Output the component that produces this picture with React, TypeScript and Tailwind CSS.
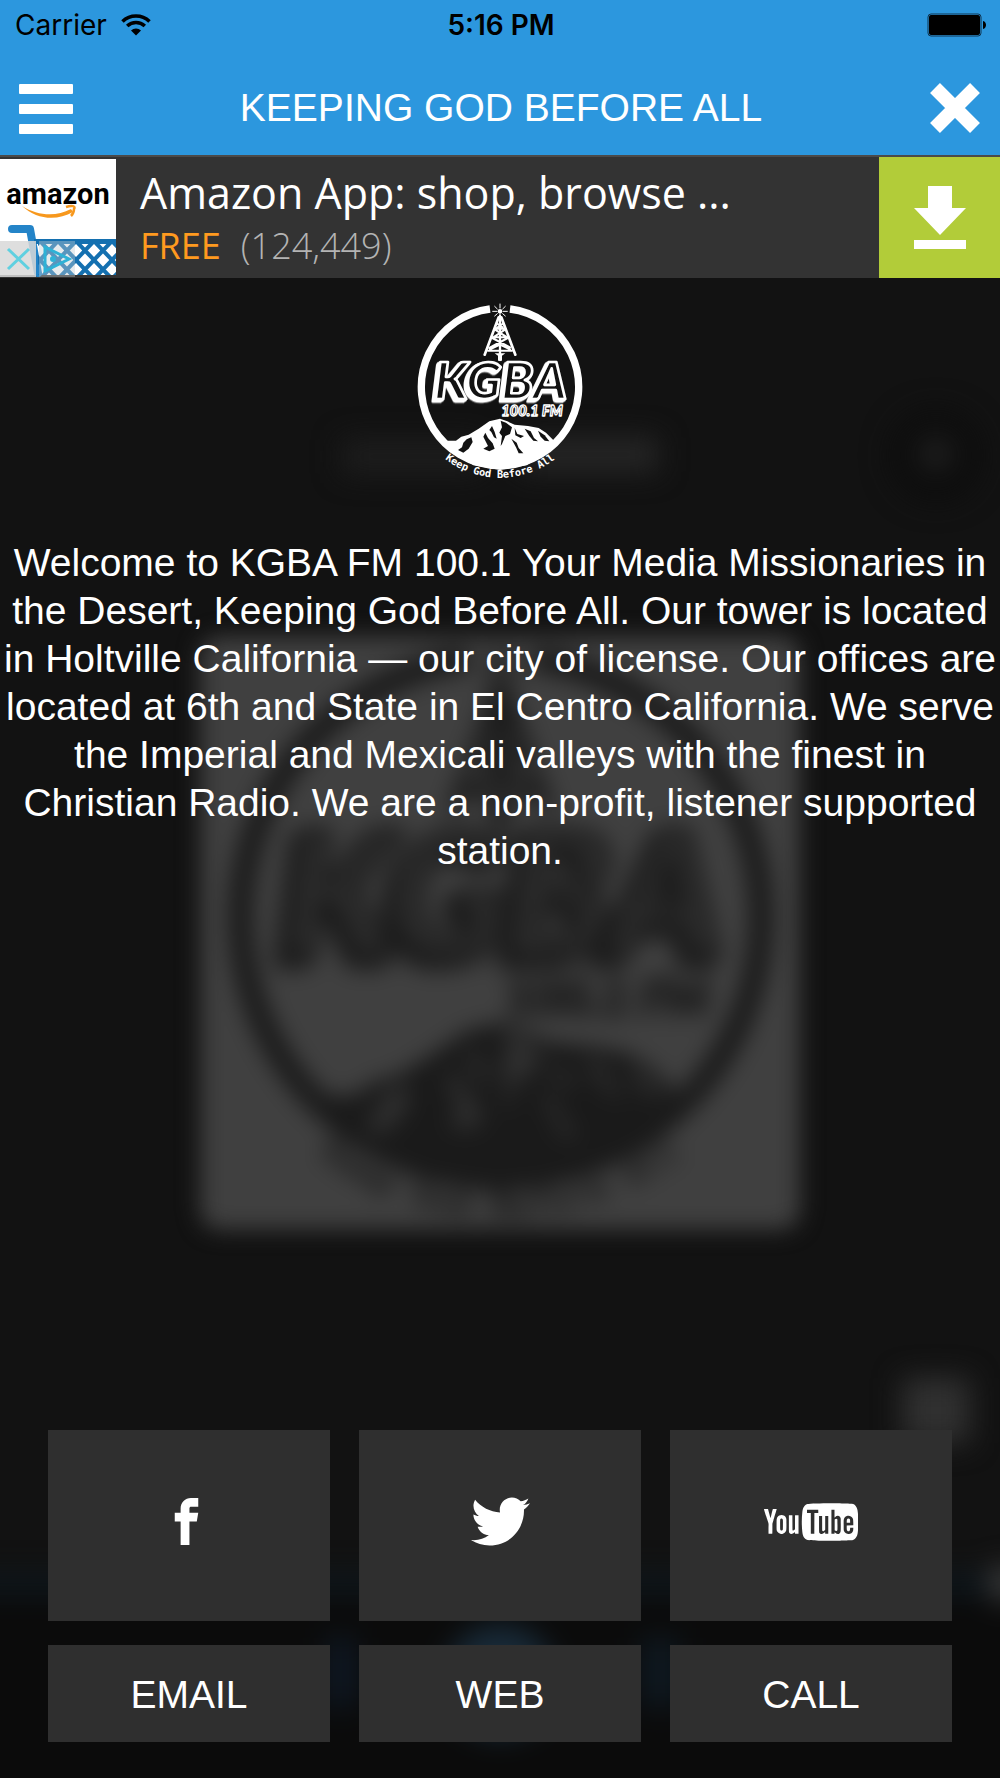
import { useId } from 'react'
import { FaTwitter } from 'react-icons/fa'
import { ImFacebook, ImYoutube2 } from 'react-icons/im'

interface StationLogoProps {
  ink: string
  paper: string
}

function StationLogo({ ink, paper }: StationLogoProps) {
  const arcId = useId()

  return (
    <g color={ink}>
      <path d="M330 57a236 236 0 1 1-60 0" fill="none" stroke={ink} strokeWidth="22" />

      {/* radio tower */}
      <g fill="none" stroke={ink} strokeLinecap="round">
        <path d="M296 82L254 194M304 82L346 194" strokeWidth="8" />
        <path d="M300 78V210" strokeWidth="7" />
        <path
          d="M290 100L308 112M310 100L290 114M284 116H316M284 118L318 140M316 118L280 142M278 142H323M277 144L330 172M323 144L268 174M264 182H336M270 178L300 164L330 178"
          strokeWidth="6"
        />
        <path
          d="M300 42V54M300 72V80M278 64H290M310 64H322M284 49L292 57M316 49L308 57M284 78L292 71M316 78L308 71"
          strokeWidth="3"
        />
      </g>
      <circle cx="300" cy="64" r="7" fill={ink} />
      <path d="M284 190H316L306 197V212H294V197Z" fill={ink} />

      {/* mountains */}
      <path
        d="M134 452L168 452L184 440L206 434L236 416L268 394L300 386L322 394L344 404L384 408L416 414L438 428L462 452L440 490L380 526L300 540L220 526L160 490Z"
        fill={ink}
      />
      <g fill={paper}>
        <path d="M302 392L318 398L336 412L330 432L316 438L306 462L302 468L306 438L298 428L306 412Z" />
        <path d="M214 442L218 456L206 476L190 488L174 480L186 472L190 458L200 448Z" />
        <path d="M256 428L264 444L278 460L284 476L268 484L250 476L264 468L256 452L250 440Z" />
        <path d="M276 408L284 426L290 446L282 442L274 426L268 420Z" />
        <path d="M344 414L352 432L372 438L362 444L346 436Z" />
        <path d="M334 446L350 458L356 474L370 490L356 490L348 472Z" />
        <path d="M374 416L392 424L402 444L414 454L400 452L388 438Z" />
        <path d="M414 422L434 436L448 454L434 452L422 440Z" />
      </g>

      {/* call letters with a drop extrusion */}
      <g className="font-['Lato',sans-serif] font-black italic" fill={paper} stroke={ink} strokeLinejoin="round">
        <text
          x="102"
          y="326"
          fontSize="156"
          strokeWidth="8"
          className="[filter:drop-shadow(-6px_4px_0_currentColor)_drop-shadow(-3px_4px_0_currentColor)]"
        >
          KGBA
        </text>
        <text x="304" y="379" fontSize="44" strokeWidth="4">
          100.1 FM
        </text>
      </g>

      <path id={arcId} d="M28 291a272 272 0 0 0 544 0" fill="none" />
      <text className="font-['DejaVu_Sans_Mono',monospace] font-bold" fontSize="31" fill={ink} textAnchor="middle">
        <textPath href={`#${arcId}`} startOffset="50%">
          Keep God Before All
        </textPath>
      </text>
    </g>
  )
}

// Dimmed player screen that shows through behind the info panel
function Backdrop() {
  return (
    <svg
      viewBox="0 0 1000 1501"
      preserveAspectRatio="xMidYMid slice"
      className="absolute inset-0 h-full w-full"
      aria-hidden="true"
    >
      <defs>
        <filter id="soft" x="-20%" y="-20%" width="140%" height="140%" colorInterpolationFilters="sRGB">
          <feGaussianBlur stdDeviation="11" />
        </filter>
        <filter id="softer" x="-20%" y="-20%" width="140%" height="140%" colorInterpolationFilters="sRGB">
          <feGaussianBlur stdDeviation="14" />
        </filter>
      </defs>
      <rect width="1000" height="1501" fill="#121212" />
      <g filter="url(#softer)">
        <rect x="342" y="162" width="140" height="34" fill="#1d1d1d" />
        <rect x="520" y="160" width="138" height="34" fill="#262626" />
        <circle cx="936" cy="178" r="46" fill="#0d0d0d" />
        <circle cx="936" cy="176" r="18" fill="#1f1f1f" />
        <rect x="902" y="1100" width="68" height="66" rx="4" fill="#303030" />
        <rect x="-40" y="1320" width="1080" height="300" fill="#0b0b0b" />
        <rect x="-40" y="1296" width="1080" height="22" fill="#0d161c" />
        <circle cx="1006" cy="1306" r="18" fill="#3c3c3c" />
        <circle cx="500" cy="1403" r="56" fill="#182a38" />
        <rect x="326" y="1360" width="30" height="70" fill="#0e1824" />
        <rect x="640" y="1360" width="40" height="70" fill="#0e1820" />
      </g>
      <g filter="url(#soft)">
        <rect x="200" y="359" width="600" height="593" rx="20" fill="#404040" />
        <g transform="translate(170 319) scale(1.103)">
          <StationLogo ink="#1a1a1a" paper="#303030" />
        </g>
      </g>
    </svg>
  )
}

function StatusBar() {
  return (
    <div className="grid h-[50px] grid-cols-3 items-center pl-[15px] pr-[13px] font-['Inter',sans-serif] text-[28px] text-black">
      <div className="flex items-center gap-[14px]">
        <span>Carrier</span>
        <svg viewBox="0 0 30 22" className="h-[22px] w-[30px]" aria-label="Wi-Fi">
          <g fill="none" stroke="currentColor" strokeWidth="3.6">
            <path d="M1.5 7.5A19.5 19.5 0 0 1 28.5 7.5" />
            <path d="M6.2 12A13 13 0 0 1 23.8 12" />
          </g>
          <path d="M15 21.5L10 16.5A7.5 7.5 0 0 1 20 16.5Z" fill="currentColor" />
        </svg>
      </div>
      <span className="text-center font-semibold">5:16 PM</span>
      <svg viewBox="0 0 60 24" className="h-6 w-[60px] justify-self-end" aria-label="Battery full">
        <rect x="1" y="1" width="53" height="22" rx="3" fill="none" stroke="#0f3450" />
        <rect x="2" y="2" width="51" height="20" rx="2" />
        <path d="M56 8c4 1 4 7 0 8z" />
      </svg>
    </div>
  )
}

function NavBar() {
  return (
    <div className="flex h-[105px] items-center justify-between px-[19px] pt-3">
      <button type="button" aria-label="Menu" className="flex w-[54px] flex-col gap-[10px]">
        <span className="h-[10px] rounded-[1px] bg-white" />
        <span className="h-[10px] rounded-[1px] bg-white" />
        <span className="h-[10px] rounded-[1px] bg-white" />
      </button>
      <h1 className="text-[39px] text-white">KEEPING GOD BEFORE ALL</h1>
      <button type="button" aria-label="Close">
        <svg viewBox="0 0 52 52" className="h-[52px] w-[52px]">
          <path d="M6 5L46 45M46 5L6 45" stroke="#fff" strokeWidth="14" />
        </svg>
      </button>
    </div>
  )
}

function AmazonIcon() {
  return (
    <svg viewBox="0 0 116 118" className="mt-[2px] h-[118px] w-[116px] shrink-0" aria-label="Amazon">
      <defs>
        <pattern id="mesh" width="18" height="19" patternUnits="userSpaceOnUse" x="76" y="82">
          <path d="M-18 -19L36 38M36 -19L-18 38" stroke="#1470b0" strokeWidth="4" />
        </pattern>
      </defs>
      <rect width="116" height="116" fill="#fff" />
      <text x="58" y="45" textAnchor="middle" className="font-['Roboto',sans-serif] font-bold" fontSize="29">
        amazon
      </text>
      <path d="M22 47C38 57 56 58 71 50L73 53C57 62 37 61 22 47Z" fill="#f7981d" />
      <path d="M66 48C72 46 76 47 74 50C74 54 72 56 71 57" fill="none" stroke="#f7981d" strokeWidth="2.5" />
      <path
        d="M12 70H30L38 114"
        fill="none"
        stroke="#2484c8"
        strokeWidth="8"
        strokeLinecap="round"
        strokeLinejoin="round"
      />
      <rect x="34" y="80" width="82" height="5" fill="#1470b0" />
      <rect x="38" y="85" width="78" height="31" fill="url(#mesh)" />
      <rect x="0" y="82" width="36" height="36" fill="#d8d8d8" opacity="0.85" />
      <rect x="39" y="82" width="36" height="36" fill="#c4ccd2" opacity="0.4" />
      <path d="M8 90L29 110M29 90L8 110" stroke="#5fd0e0" strokeWidth="3" />
      <path d="M45 88L69 100L45 112Z" fill="none" stroke="#2fb2d6" strokeWidth="3" />
      <circle cx="53" cy="100" r="3" fill="#2fb2d6" />
    </svg>
  )
}

function AdBanner() {
  return (
    <aside className="flex h-[123px] border-t-2 border-[#4a4a4a] bg-[#333333] font-['Open_Sans','Noto_Sans',sans-serif]">
      <AmazonIcon />
      <a href="#amazon-app" className="flex min-w-0 flex-1 flex-col justify-center px-6">
        <span className="whitespace-nowrap text-[43px] leading-[56px] text-white">Amazon App: shop, browse ...</span>
        <span className="flex gap-5 text-[36px] leading-[50px]">
          <span className="text-[#ff9a1f]">FREE</span>
          <span className="font-light text-[#b4b4b4]">(124,449)</span>
        </span>
      </a>
      <button type="button" aria-label="Download" className="flex w-[121px] items-center justify-center bg-[#b2cc39]">
        <svg viewBox="0 0 52 63" className="h-[63px] w-[52px]" fill="#fff">
          <path d="M14 0H38V22H52L26 49L0 22H14Z" />
          <rect y="54" width="52" height="9" />
        </svg>
      </button>
    </aside>
  )
}

const socials = [
  { label: 'Facebook', href: '#facebook', icon: <ImFacebook className="mr-[6px] h-[47px] w-[47px]" /> },
  { label: 'Twitter', href: '#twitter', icon: <FaTwitter className="h-[59px] w-[59px]" /> },
  { label: 'YouTube', href: '#youtube', icon: <ImYoutube2 className="h-[94px] w-[94px]" /> },
]

const contacts = [
  { label: 'EMAIL', href: '#email' },
  { label: 'WEB', href: '#web' },
  { label: 'CALL', href: '#call' },
]

export default function App() {
  return (
    <div className="flex min-h-screen flex-col bg-[#121212] font-['Liberation_Sans',Arial,sans-serif]">
      <header className="bg-[#2c97de]">
        <StatusBar />
        <NavBar />
      </header>
      <AdBanner />

      <main className="relative isolate flex flex-1 flex-col overflow-hidden">
        <div className="absolute inset-0 -z-10">
          <Backdrop />
        </div>

        <svg viewBox="0 0 600 600" className="mx-auto mt-3 h-[200px] w-[200px]" role="img" aria-label="KGBA 100.1 FM">
          <StationLogo ink="#ffffff" paper="#121212" />
        </svg>

        <p className="mt-[49px] px-1 text-center text-[39px] leading-[48px] text-white">
          Welcome to KGBA FM 100.1 Your Media Missionaries in the Desert, Keeping God Before All. Our tower is located
          in Holtville California — our city of license. Our offices are located at 6th and State in El Centro
          California. We serve the Imperial and Mexicali valleys with the finest in Christian Radio. We are a
          non-profit, listener supported station.
        </p>

        <nav className="mt-auto grid grid-cols-3 gap-x-[29px] gap-y-6 px-12 pb-9 text-white">
          {socials.map((item) => (
            <a
              key={item.label}
              href={item.href}
              aria-label={item.label}
              className="flex h-[191px] items-center justify-center bg-[#2f2f2f] pb-2"
            >
              {item.icon}
            </a>
          ))}
          {contacts.map((item) => (
            <a
              key={item.label}
              href={item.href}
              className="flex h-[97px] items-center justify-center bg-[#2f2f2f] pt-1 text-[39px]"
            >
              {item.label}
            </a>
          ))}
        </nav>
      </main>
    </div>
  )
}
